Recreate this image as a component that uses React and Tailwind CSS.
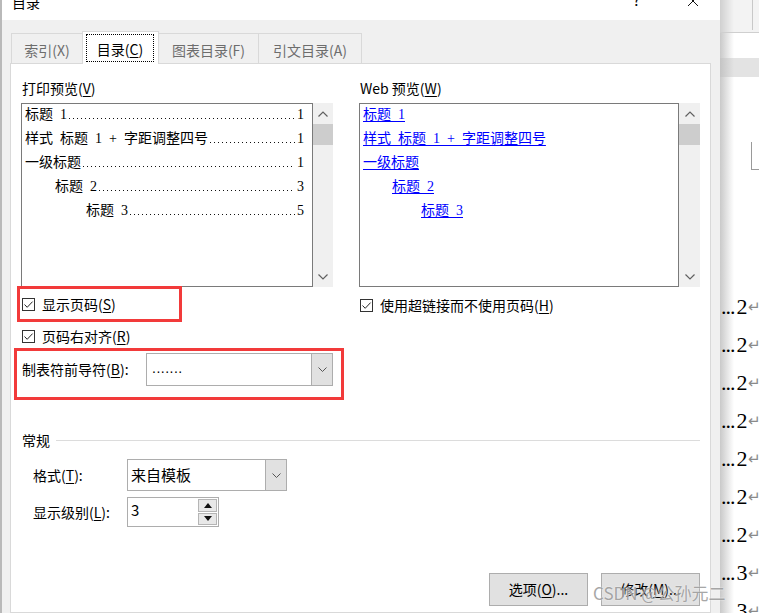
import React from 'react';

const printItems = [
  { text: '标题\u20021', page: '1', indent: 'pl-[3px]' },
  { text: '样式\u2002标题\u20021\u2002+\u2002字距调整四号', page: '1', indent: 'pl-[3px]' },
  { text: '一级标题', page: '1', indent: 'pl-[3px]' },
  { text: '标题\u20022', page: '3', indent: 'pl-[33px]' },
  { text: '标题\u20023', page: '5', indent: 'pl-[64px]' },
];

const webItems = [
  { text: '标题\u20021', indent: 'pl-[3px]' },
  { text: '样式\u2002标题\u20021\u2002+\u2002字距调整四号', indent: 'pl-[3px]' },
  { text: '一级标题', indent: 'pl-[3px]' },
  { text: '标题\u20022', indent: 'pl-[32px]' },
  { text: '标题\u20023', indent: 'pl-[61px]' },
];

const docLines = ['2', '2', '2', '2', '2', '2', '2', '3', '3'];

function Check() {
  return (
    <span className="w-[13px] h-[13px] border border-[#333333] bg-white flex items-center justify-center shrink-0">
      <svg width="11" height="11" viewBox="0 0 11 11">
        <path d="M1.5 5.5 L4.2 8.3 L9.6 2.6" fill="none" stroke="#222" strokeWidth="1" />
      </svg>
    </span>
  );
}

function Chevron() {
  return (
    <svg width="9" height="5" viewBox="0 0 9 5">
      <path d="M0.5 0.5 L4.5 4.5 L8.5 0.5" fill="none" stroke="#555" strokeWidth="1" />
    </svg>
  );
}

function Scrollbar({ w }) {
  return (
    <div className={`${w} h-full bg-[#f0f0f0] flex flex-col`}>
      <div className="h-[21px] flex items-center justify-center">
        <svg width="10" height="6" viewBox="0 0 10 6">
          <path d="M0.5 5.5 L5 1 L9.5 5.5" fill="none" stroke="#606060" strokeWidth="1.2" />
        </svg>
      </div>
      <div className="h-[21px] bg-[#cdcdcd]" />
      <div className="flex-1" />
      <div className="h-[21px] flex items-center justify-center">
        <svg width="10" height="6" viewBox="0 0 10 6">
          <path d="M0.5 0.5 L5 5 L9.5 0.5" fill="none" stroke="#606060" strokeWidth="1.2" />
        </svg>
      </div>
    </div>
  );
}

function Select({ w, h, btn, children }) {
  return (
    <div className={`flex border border-[#adadad] bg-white ${w} ${h}`}>
      <div className="flex-1 flex items-center pl-[3px] text-[15px] text-black">{children}</div>
      <div className={`${btn} bg-[#e1e1e1] border-l border-[#adadad] flex items-center justify-center`}>
        <Chevron />
      </div>
    </div>
  );
}

function Key({ k }) {
  return <u className="underline-offset-[2px]">{k}</u>;
}

export default function App() {
  return (
    <div className="w-[759px] h-[613px] overflow-hidden flex bg-white relative font-['Noto_Sans_CJK_SC',sans-serif] text-[14px] text-black">
      {/* Dialog */}
      <div className="w-[720px] h-full flex flex-col bg-[#f0f0f0] border-l-2 border-[#b9b9b9]">
        {/* Title bar */}
        <div className="h-[20px] bg-white flex items-start overflow-hidden shrink-0">
          <span className="ml-[10px] -mt-[8px] leading-[20px]">目录</span>
          <span className="ml-auto -mt-[10px] leading-[20px] text-[15px]">?</span>
          <svg className="ml-[47px] mr-[21px] -mt-[5px]" width="12" height="12" viewBox="0 0 12 12">
            <path d="M1 1 L11 11 M11 1 L1 11" stroke="#111" strokeWidth="1" />
          </svg>
        </div>

        {/* Tabs */}
        <div className="mt-[11px] h-[32px] flex items-end pl-[9px] relative z-10 shrink-0">
          <div className="w-[72px] h-[30px] border border-b-0 border-[#d9d9d9] flex items-center justify-center pt-[3px] text-[#6d6d6d]">
            索引(X)
          </div>
          <div className="-ml-px w-[77px] h-[33px] -mb-px bg-white border border-b-0 border-[#d9d9d9] pl-[3px] pr-[4px] pt-[2px] pb-[2px]">
            <div className="h-full border border-dotted border-black flex items-center justify-center pt-[2px]">
              目录(<Key k="C" />)
            </div>
          </div>
          <div className="-ml-px w-[101px] h-[30px] border border-b-0 border-[#d9d9d9] flex items-center justify-center pt-[3px] text-[#6d6d6d]">
            图表目录(F)
          </div>
          <div className="-ml-px w-[104px] h-[30px] border border-b-0 border-[#d9d9d9] flex items-center justify-center pt-[3px] text-[#6d6d6d]">
            引文目录(A)
          </div>
        </div>

        {/* Panel */}
        <div className="ml-[8px] w-[701px] flex-1 bg-white border border-[#d9d9d9] pl-[10px] pr-[10px] flex flex-col">
          {/* Upper: previews */}
          <div className="mt-[14px] h-[347px] flex shrink-0">
            {/* Print preview */}
            <div className="w-[312px] flex flex-col">
              <div className="h-[20px] leading-[20px] pl-px">
                打印预览(<Key k="V" />)
              </div>
              <div className="mt-[5px] h-[184px] flex">
                <div className="w-[292px] h-full border border-[#7a7a7a] overflow-hidden font-['Liberation_Serif','Noto_Sans_CJK_SC',serif] text-[14px]">
                  <div className="-mt-[2px]">
                    {printItems.map((it) => (
                      <div key={it.text} className={`flex h-[24px] items-center pr-[8px] ${it.indent}`}>
                        <span className="whitespace-nowrap">{it.text}</span>
                        <span className="flex-1 self-center mt-[9px] mx-[2px] h-px bg-[linear-gradient(90deg,#111_1px,transparent_1px)] bg-[length:4px_1px] bg-repeat-x" />
                        <span>{it.page}</span>
                      </div>
                    ))}
                  </div>
                </div>
                <Scrollbar w="w-[20px]" />
              </div>
              <div className="-mt-px -ml-[4px] w-[165px] h-[36px] border-[3px] border-[#f23a3a] flex items-center pl-[2px] gap-[7px]">
                <Check />
                <span>
                  显示页码(<Key k="S" />)
                </span>
              </div>
              <div className="mt-[4px] h-[20px] flex items-center pl-px gap-[7px]">
                <Check />
                <span>
                  页码右对齐(<Key k="R" />)
                </span>
              </div>
              <div className="mt-[2px] -ml-[7px] w-[330px] h-[52px] border-[3px] border-[#f23a3a] flex items-start pl-[5px] pt-[2px]">
                <span className="leading-[33px]">
                  制表符前导符(<Key k="B" />):
                </span>
                <div className="ml-auto mr-[8px]">
                  <Select w="w-[187px]" h="h-[33px]" btn="w-[21px]">
                    <span className="font-['Liberation_Sans',sans-serif] text-[14px] tracking-[0.5px] -mt-[3px] pl-[2px]">.......</span>
                  </Select>
                </div>
              </div>
            </div>

            {/* Divider */}
            <div className="ml-[13px] w-px h-full bg-[#a0a0a0]" />

            {/* Web preview */}
            <div className="ml-[13px] w-[341px] flex flex-col">
              <div className="h-[20px] leading-[20px] pl-px">
                Web 预览(<Key k="W" />)
              </div>
              <div className="mt-[5px] h-[184px] flex">
                <div className="w-[320px] h-full border border-[#7a7a7a] overflow-hidden font-['Liberation_Serif','Noto_Sans_CJK_SC',serif] text-[14px]">
                  <div className="-mt-[2px]">
                    {webItems.map((it) => (
                      <div key={it.text} className={`h-[24px] flex items-center ${it.indent}`}>
                        <span className="whitespace-nowrap text-[#0000ff] underline underline-offset-[2px]">{it.text}</span>
                      </div>
                    ))}
                  </div>
                </div>
                <Scrollbar w="w-[21px]" />
              </div>
              <div className="mt-[8px] h-[20px] flex items-center pl-px gap-[7px]">
                <Check />
                <span>
                  使用超链接而不使用页码(<Key k="H" />)
                </span>
              </div>
            </div>
          </div>

          {/* General */}
          <div className="mt-[5px] h-[20px] flex items-center pl-px">
            <span>常规</span>
            <div className="flex-1 h-px bg-[#dcdcdc] ml-[6px]" />
          </div>
          <div className="mt-[9px] flex items-center pl-[12px]">
            <span className="w-[94px]">
              格式(<Key k="T" />):
            </span>
            <Select w="w-[160px]" h="h-[32px]" btn="w-[21px]">
              来自模板
            </Select>
          </div>
          <div className="mt-[6px] flex items-center pl-[12px]">
            <span className="w-[94px]">
              显示级别(<Key k="L" />):
            </span>
            <div className="w-[92px] h-[30px] border border-[#adadad] bg-white flex">
              <span className="flex-1 pl-[3px] text-[15px] leading-[24px]">3</span>
              <div className="w-[19px] mr-px py-px flex flex-col gap-px">
                <div className="flex-1 bg-[#e8e8e8] border border-[#b5b5b5] flex items-center justify-center">
                  <svg width="8" height="5" viewBox="0 0 8 5"><path d="M0 5 L4 0 L8 5 Z" fill="#111" /></svg>
                </div>
                <div className="flex-1 bg-[#e8e8e8] border border-[#b5b5b5] flex items-center justify-center">
                  <svg width="8" height="5" viewBox="0 0 8 5"><path d="M0 0 L4 5 L8 0 Z" fill="#111" /></svg>
                </div>
              </div>
            </div>
          </div>

          {/* Buttons */}
          <div className="mt-[46px] flex justify-end gap-[13px]">
            <button className="w-[99px] h-[33px] bg-[#e1e1e1] border border-[#adadad] flex items-center justify-center">
              选项(<Key k="O" />)...
            </button>
            <button className="w-[99px] h-[33px] bg-[#e1e1e1] border border-[#adadad] flex items-center justify-center">
              修改(<Key k="M" />)...
            </button>
          </div>
        </div>
      </div>

      {/* Document behind the dialog */}
      <div className="flex-1 h-full flex flex-col bg-[linear-gradient(90deg,#c9c9c9_0px,#ffffff_14px)] overflow-hidden">
        <div className="h-[33px] shrink-0 bg-[linear-gradient(90deg,#d0d0d0_0px,#f3f3f3_14px)] border-b border-[#cfcfcf] flex justify-end">
          <div className="w-px h-[30px] bg-[#c8c8c8] mr-[6px]" />
        </div>
        <div className="h-[25px] shrink-0" />
        <div className="h-[19px] shrink-0 bg-[linear-gradient(90deg,#c4c4c4_0px,#e3e3e3_14px)]" />
        <div className="h-[65px] shrink-0" />
        <div className="ml-[31px] h-[28px] shrink-0 border-l border-b border-[#9a9a9a]" />
        <div className="h-[118px] shrink-0" />
        {docLines.map((n, i) => (
          <div key={i} className="h-[38px] shrink-0 flex items-center pl-px whitespace-nowrap font-['Liberation_Serif',serif] text-[22px] leading-none">
            <span className="tracking-[-1px]">...</span>
            <span className="ml-[2px]">{n}</span>
            <span className="text-[15px] text-[#8a8a8a]">↵</span>
          </div>
        ))}
      </div>

      {/* Watermark */}
      <div className="absolute left-[593px] top-[582px] text-[17px] leading-[22px] text-[#9e9e9e] opacity-90 whitespace-nowrap [text-shadow:0_0_2px_#ffffff]">
        CSDN @公孙元二
      </div>
    </div>
  );
}
